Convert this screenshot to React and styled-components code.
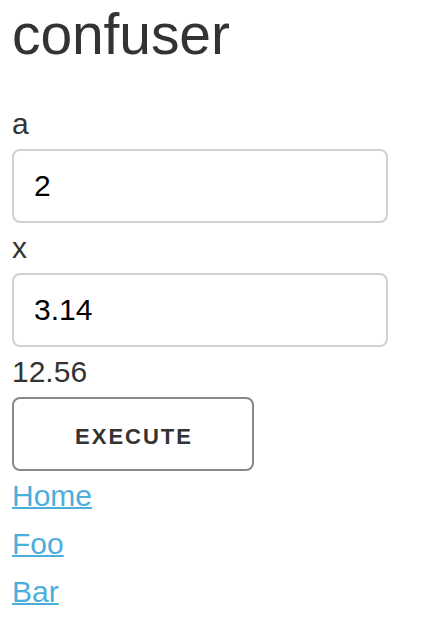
import React from "react";
import styled, { createGlobalStyle } from "styled-components";

const GlobalStyle = createGlobalStyle`
  body {
    margin: 0;
    background: #fff;
    font-family: "Liberation Sans", Arial, sans-serif;
    color: #333;
  }
`;

const fields = [
  { name: "a", value: "2" },
  { name: "x", value: "3.14" },
];

const links = ["Home", "Foo", "Bar"];

const App = () => {
  return (
    <Page>
      <GlobalStyle />
      <Title>confuser</Title>
      {fields.map((field) => (
        <Field key={field.name}>
          <Label htmlFor={`field-${field.name}`}>{field.name}</Label>
          <Input id={`field-${field.name}`} defaultValue={field.value} />
        </Field>
      ))}
      <Result>12.56</Result>
      <ExecuteButton type="button">Execute</ExecuteButton>
      <Nav>
        {links.map((link) => (
          <NavLink key={link} href="#">
            {link}
          </NavLink>
        ))}
      </Nav>
    </Page>
  );
};

const Page = styled.div`
  display: flex;
  flex-direction: column;
  align-items: flex-start;
  padding: 0 12px;
`;

const Title = styled.h1`
  margin: 0 0 31px;
  font-size: 57px;
  line-height: 68px;
  font-weight: 400;
  letter-spacing: -0.1px;
  color: #333;
`;

const Field = styled.div`
  display: flex;
  flex-direction: column;
  align-items: flex-start;
`;

const Label = styled.label`
  display: block;
  font-size: 30px;
  line-height: 50px;
  color: #333;
`;

const Input = styled.input`
  box-sizing: border-box;
  width: 376px;
  height: 74px;
  padding: 0 20px;
  border: 2px solid #d1d1d1;
  border-radius: 8px;
  font-family: "Liberation Sans", Arial, sans-serif;
  font-size: 30px;
  color: #000;
  background: #fff;
  outline: none;
`;

const Result = styled.div`
  font-size: 30px;
  line-height: 50px;
  color: #333;
`;

const ExecuteButton = styled.button`
  box-sizing: border-box;
  width: 242px;
  height: 74px;
  padding: 5px 0 0 2px;
  border: 2px solid #888;
  border-radius: 8px;
  background: transparent;
  font-family: "Liberation Sans", Arial, sans-serif;
  font-size: 22px;
  font-weight: 700;
  letter-spacing: 2px;
  text-transform: uppercase;
  color: #333;
`;

const Nav = styled.nav`
  display: flex;
  flex-direction: column;
  align-items: flex-start;
  padding-top: 1px;
`;

const NavLink = styled.a`
  font-size: 30px;
  line-height: 48px;
  color: #4daedb;
  text-decoration: underline;
  text-decoration-thickness: 2px;
`;

export default App;
